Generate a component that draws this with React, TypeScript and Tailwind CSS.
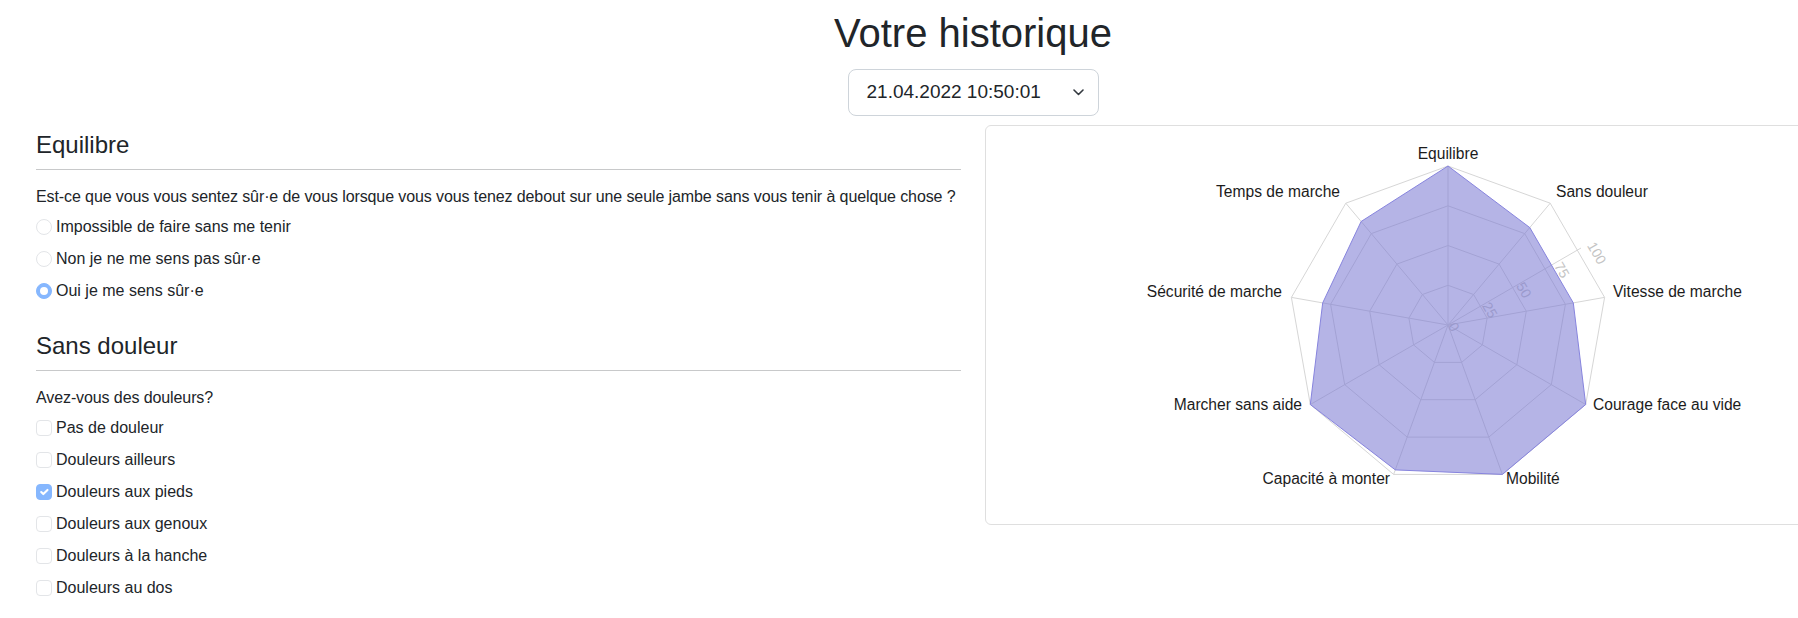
import React from 'react';
import clsx from 'clsx';

// radar geometry, in page coordinates
const CX = 1448;
const CY = 325;
const R = 159;

type Axis = {
  label: string;
  value: number;
  x: number;
  y: number;
  anchor: 'start' | 'middle' | 'end';
};

const axes: Axis[] = [
  { label: 'Equilibre', value: 100, x: 1448, y: 158.5, anchor: 'middle' },
  { label: 'Sans douleur', value: 80, x: 1556, y: 197, anchor: 'start' },
  { label: 'Vitesse de marche', value: 80, x: 1613, y: 297, anchor: 'start' },
  { label: 'Courage face au vide', value: 100, x: 1593, y: 410, anchor: 'start' },
  { label: 'Mobilité', value: 100, x: 1506, y: 484, anchor: 'start' },
  { label: 'Capacité à monter', value: 97, x: 1390, y: 484, anchor: 'end' },
  { label: 'Marcher sans aide', value: 100, x: 1302, y: 410, anchor: 'end' },
  { label: 'Sécurité de marche', value: 80, x: 1282, y: 297, anchor: 'end' },
  { label: 'Temps de marche', value: 85, x: 1340, y: 197, anchor: 'end' },
];

const ticks = [
  { t: '0', x: 1454, y: 327 },
  { t: '25', x: 1490, y: 310 },
  { t: '50', x: 1524, y: 290 },
  { t: '75', x: 1562, y: 270 },
  { t: '100', x: 1597, y: 253 },
];

const pt = (i: number, r: number) => {
  const a = (i * 40 * Math.PI) / 180;
  return [CX + r * Math.sin(a), CY - r * Math.cos(a)];
};

const poly = (r: number) =>
  axes.map((_, i) => pt(i, r).map((n) => n.toFixed(1)).join(',')).join(' ');

const RadarChart = () => {
  const dataPoints = axes
    .map((a, i) => pt(i, (a.value / 100) * R).map((n) => n.toFixed(1)).join(','))
    .join(' ');

  return (
    <svg width="923" height="398" viewBox="986 126 923 398" className="block">
      {/* grid */}
      <g stroke="#d6d6d6" strokeWidth="1" fill="none">
        {[0.25, 0.5, 0.75, 1].map((k) => (
          <polygon key={k} points={poly(R * k)} />
        ))}
        {axes.map((_, i) => {
          const [x, y] = pt(i, R);
          return <line key={i} x1={CX} y1={CY} x2={x} y2={y} />;
        })}
        <line x1={CX} y1={CY} x2={1581} y2={248} />
      </g>
      <g fill="#c4c4c4" fontSize="14" textAnchor="middle" dominantBaseline="central">
        {ticks.map((t) => (
          <text key={t.t} x={t.x} y={t.y} transform={`rotate(60 ${t.x} ${t.y})`}>
            {t.t}
          </text>
        ))}
      </g>
      {/* dataset */}
      <polygon
        points={dataPoints}
        fill="rgba(123,121,210,0.56)"
        stroke="#8784de"
        strokeWidth="1"
      />
      <g fill="#1c1c1c" fontSize="15.6">
        {axes.map((a) => (
          <text key={a.label} x={a.x} y={a.y} textAnchor={a.anchor}>
            {a.label}
          </text>
        ))}
      </g>
    </svg>
  );
};

const Radio = ({ label, checked }: { label: string; checked?: boolean }) => (
  <div className="flex h-8 items-center gap-1">
    <span
      className={clsx(
        'flex h-4 w-4 shrink-0 items-center justify-center rounded-full border',
        checked ? 'border-[#86b7fe] bg-[#86b7fe]' : 'border-[#e3e5e8] bg-white'
      )}
    >
      {checked && <span className="h-2 w-2 rounded-full bg-white" />}
    </span>
    <span className="leading-6">{label}</span>
  </div>
);

const Checkbox = ({ label, checked }: { label: string; checked?: boolean }) => (
  <div className="flex h-8 items-center gap-1">
    <span
      className={clsx(
        'flex h-4 w-4 shrink-0 items-center justify-center rounded-[4px] border',
        checked ? 'border-[#86b7fe] bg-[#86b7fe]' : 'border-[#e3e5e8] bg-white'
      )}
    >
      {checked && (
        <svg width="14" height="14" viewBox="0 0 20 20">
          <path d="M6 10l3 3l6-6" fill="none" stroke="#fff" strokeWidth="3" strokeLinecap="round" strokeLinejoin="round" />
        </svg>
      )}
    </span>
    <span className="leading-6">{label}</span>
  </div>
);

const Section = ({
  title,
  question,
  first,
  children,
}: {
  title: string;
  question: string;
  first?: boolean;
  children: React.ReactNode;
}) => (
  <div className={first ? 'mt-[5px]' : 'mt-6'}>
    <h4 className="text-[24px] leading-[29px]">{title}</h4>
    <hr className="mt-[10px] border-0 border-t border-[#c8c9ca]" />
    <p className="mt-[15px] mb-[2px] whitespace-nowrap leading-6 tracking-[-0.1px]">{question}</p>
    <div>{children}</div>
  </div>
);

export default function App() {
  return (
    <div className="w-full overflow-hidden bg-white font-['Liberation_Sans',Arial,sans-serif] text-[16px] text-[#212529]">
      <div className="w-[1946px] pb-6">
        <h1 className="pt-[9px] text-center text-[40px] leading-[48px] font-normal">
          Votre historique
        </h1>
        <div className="mx-auto mt-3 flex h-[47px] w-[251px] items-center justify-between rounded-lg border border-[#ced4da] pl-[18px] pr-[14px]">
          <span className="text-[19px]">21.04.2022 10:50:01</span>
          <svg width="11" height="7" viewBox="0 0 11 7">
            <path d="M1 1l4.5 4.5L10 1" fill="none" stroke="#343a40" strokeWidth="1.6" strokeLinecap="round" strokeLinejoin="round" />
          </svg>
        </div>

        <div className="mt-[9px] grid grid-cols-2 gap-6 px-[36px]">
          <div>
            <Section
              first
              title="Equilibre"
              question="Est-ce que vous vous sentez sûr·e de vous lorsque vous vous tenez debout sur une seule jambe sans vous tenir à quelque chose ?"
            >
              <Radio label="Impossible de faire sans me tenir" />
              <Radio label="Non je ne me sens pas sûr·e" />
              <Radio label="Oui je me sens sûr·e" checked />
            </Section>
            <Section title="Sans douleur" question="Avez-vous des douleurs?">
              <Checkbox label="Pas de douleur" />
              <Checkbox label="Douleurs ailleurs" />
              <Checkbox label="Douleurs aux pieds" checked />
              <Checkbox label="Douleurs aux genoux" />
              <Checkbox label="Douleurs à la hanche" />
              <Checkbox label="Douleurs au dos" />
            </Section>
          </div>
          <div>
            <div className="h-[400px] rounded-md border border-[#dfdfdf] bg-white">
              <RadarChart />
            </div>
          </div>
        </div>
      </div>
    </div>
  );
}
